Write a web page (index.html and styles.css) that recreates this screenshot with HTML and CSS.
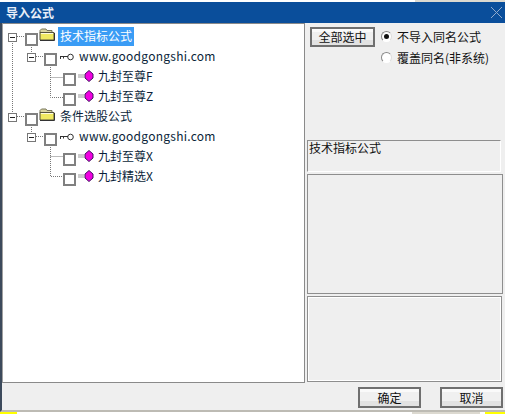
FILE: index.html
```html
<!DOCTYPE html>
<html lang="zh">
<head>
<meta charset="utf-8">
<title>导入公式</title>
<link rel="stylesheet" href="styles.css">
</head>
<body>
<div class="strip top-strip"><span class="fill"></span><span class="beige"></span></div>
<div class="dialog">
  <header class="titlebar">
    <span class="title">导入公式</span>
    <svg class="close" width="11" height="11" viewBox="0 0 11 11"><path d="M0 0L11 11M11 0L0 11" stroke="#8fa9cc" stroke-width="1" fill="none"/></svg>
  </header>
  <div class="content">
    <div class="tree">
      <svg class="lines" width="120" height="190" viewBox="0 0 120 190">
        <g stroke="#777" stroke-width="1" stroke-dasharray="1 1" fill="none">
          <path d="M11.500 17V88"/><path d="M16 12.500H24"/><path d="M16 92.500H24"/>
          <path d="M30.500 21V28"/><path d="M30.500 101V108"/>
          <path d="M35 32.500H43"/><path d="M35 112.500H43"/>
          <path d="M49.500 41V73.500H62"/><path d="M49.500 53.500H62"/>
          <path d="M49.500 121V152.500H62"/><path d="M49.500 132.500H62"/>
        </g>
      </svg>
      <div class="row row-a">
        <span class="expander"></span><span class="check"></span>
        <svg class="folder" width="16" height="13" viewBox="0 0 16 13"><path d="M1 2.500L2.500 1H7L8 2.500H13V5H1Z" fill="#d8d4a0" stroke="#77745a"/><path d="M1 4.500H15V12H1Z" fill="#f0ea62" stroke="#55533f"/><path d="M2 5.500H14" stroke="#fffde0"/><path d="M1 12.500H15.500V5" stroke="#333" fill="none"/></svg>
        <span class="label selected">技术指标公式</span>
      </div>
      <div class="row row-b">
        <span class="expander"></span><span class="check"></span>
        <svg class="key" width="16" height="8" viewBox="0 0 16 8"><circle cx="11.500" cy="4" r="2.800" fill="#fff" stroke="#333"/><path d="M1 3.500H9M1.500 3.500V6M4.500 3.500V5.500" stroke="#333" fill="none"/></svg>
        <span class="label url">www.goodgongshi.com</span>
      </div>
      <div class="row row-c">
        <span class="check"></span>
        <svg class="gem" width="16" height="12" viewBox="0 0 16 12"><path d="M0 5H6M0 7H6" stroke="#999"/><path d="M11 0.500L15 4V8L11 11.500L7 8V4Z" fill="#f000e0" stroke="#401060"/></svg>
        <span class="label">九封至尊F</span>
      </div>
      <div class="row row-c">
        <span class="check"></span>
        <svg class="gem" width="16" height="12" viewBox="0 0 16 12"><path d="M0 5H6M0 7H6" stroke="#999"/><path d="M11 0.500L15 4V8L11 11.500L7 8V4Z" fill="#f000e0" stroke="#401060"/></svg>
        <span class="label">九封至尊Z</span>
      </div>
      <div class="row row-a">
        <span class="expander"></span><span class="check"></span>
        <svg class="folder" width="16" height="13" viewBox="0 0 16 13"><path d="M1 2.500L2.500 1H7L8 2.500H13V5H1Z" fill="#d8d4a0" stroke="#77745a"/><path d="M1 4.500H15V12H1Z" fill="#f0ea62" stroke="#55533f"/><path d="M2 5.500H14" stroke="#fffde0"/><path d="M1 12.500H15.500V5" stroke="#333" fill="none"/></svg>
        <span class="label">条件选股公式</span>
      </div>
      <div class="row row-b">
        <span class="expander"></span><span class="check"></span>
        <svg class="key" width="16" height="8" viewBox="0 0 16 8"><circle cx="11.500" cy="4" r="2.800" fill="#fff" stroke="#333"/><path d="M1 3.500H9M1.500 3.500V6M4.500 3.500V5.500" stroke="#333" fill="none"/></svg>
        <span class="label url">www.goodgongshi.com</span>
      </div>
      <div class="row row-c">
        <span class="check"></span>
        <svg class="gem" width="16" height="12" viewBox="0 0 16 12"><path d="M0 5H6M0 7H6" stroke="#999"/><path d="M11 0.500L15 4V8L11 11.500L7 8V4Z" fill="#f000e0" stroke="#401060"/></svg>
        <span class="label">九封至尊X</span>
      </div>
      <div class="row row-c">
        <span class="check"></span>
        <svg class="gem" width="16" height="12" viewBox="0 0 16 12"><path d="M0 5H6M0 7H6" stroke="#999"/><path d="M11 0.500L15 4V8L11 11.500L7 8V4Z" fill="#f000e0" stroke="#401060"/></svg>
        <span class="label">九封精选X</span>
      </div>
    </div>
    <aside class="side">
      <div class="options">
        <button class="btn select-all">全部选中</button>
        <div class="radios">
          <div class="radio-row"><span class="radio on"></span><span>不导入同名公式</span></div>
          <div class="radio-row"><span class="radio"></span><span>覆盖同名(非系统)</span></div>
        </div>
      </div>
      <div class="panel info">技术指标公式</div>
      <div class="panel mid"></div>
      <div class="panel low"></div>
    </aside>
  </div>
  <footer class="footer">
    <button class="btn action">确定</button>
    <button class="btn action">取消</button>
  </footer>
</div>
<div class="strip bottom-strip"><span class="yellow y-left"></span><span class="fill"></span><span class="beige"></span><span class="yellow y-right"></span></div>
</body>
</html>
```
FILE: styles.css
```css
* { box-sizing: border-box; }
html, body { margin: 0; height: 100%; background: #fff; overflow: hidden; }
body { font: 12px/14px "Noto Sans CJK SC", "Liberation Sans", sans-serif; color: #111; }
.strip { display: flex; height: 2px; }
.fill { flex: 1; background: #fff; }
.beige { width: 90px; background: #dcd9d0; }
.bottom-strip .beige { width: 68px; margin-right: 5px; }
.yellow { background: #ffff00; }
.y-left { width: 17px; }
.y-right { width: 20px; }
.dialog { width: 505px; height: 410px; background: #efefef; border-left: 2px solid #3c4a5c; border-bottom: 2px solid #bdbbb4; display: flex; flex-direction: column; }
.titlebar { height: 21px; flex: none; margin-left: -2px; background: #0a4e9b; color: #fff; display: flex; align-items: center; justify-content: space-between; padding: 0 3px 0 6px; }
.title { font-size: 12px; font-weight: 700; color: #e8eef8; }
.close { display: block; }
.content { display: flex; height: 360px; flex: none; }
.tree { position: relative; width: 303px; flex: none; background: #fff; border: 1px solid #8a8a8a; border-left-color: #a0a0a0; padding-top: 5px; }
.lines { position: absolute; top: 0; left: -2px; }
.row { position: relative; display: flex; align-items: center; height: 20px; }
.row-a { padding-left: 5px; }
.row-b { padding-left: 24px; }
.row-c { padding-left: 60px; }
.expander { width: 9px; height: 9px; margin-bottom: 4px; border: 1px solid #777; background: linear-gradient(#222, #222) center/5px 1px no-repeat, #fff; flex: none; }
.check { width: 13px; height: 13px; border: 2px solid #808080; background: #fff; flex: none; }
.row-a .check { margin-left: 8px; }
.row-b .check { margin-left: 8px; }
.row-a .folder { margin: 0 3px 10px 1px; flex: none; }
.row-b .key { margin: 0 4px 4px 2px; flex: none; }
.gem { margin: 0 4px 6px 2px; flex: none; }
.label { font-size: 12px; line-height: 18px; white-space: nowrap; color: #0b1f3a; margin-bottom: 7px; }
.url { letter-spacing: 0.26px; }
.row-a .label { padding: 0 2px; margin-bottom: 6px; }
.selected { background: #3a9cf5; color: #fff; height: 19px; }
.row-a .selected { color: #fff; }
.side { flex: 1; min-width: 0; display: flex; flex-direction: column; padding: 0 4px 0 2px; }
.options { display: flex; height: 117px; padding: 4px 0 0 3px; gap: 6px; align-items: flex-start; flex: none; }
.btn { font: 12px/14px "Noto Sans CJK SC", "Liberation Sans", sans-serif; color: #111; padding: 0; border: 2px solid #6f6f6f; background: linear-gradient(#fafafa 0 20%, #f0f0f0 20% 70%, #e2e2e2 70%); }
.select-all { width: 65px; height: 20px; }
.radios { display: flex; flex-direction: column; gap: 4px; padding-top: 1px; }
.radio-row { display: flex; align-items: center; gap: 5px; height: 17px; color: #111; }
.radio { width: 11px; height: 11px; border-radius: 50%; border: 1px solid; border-color: #888 #ddd #fff #888; background: #fff; flex: none; position: relative; }
.radio.on::after { content: ""; position: absolute; inset: 2px; border-radius: 50%; background: #111; }
.panel { flex: none; background: #efefef; border: 1px solid #8e8e8e; }
.info { height: 32px; padding-left: 1px; border-right-color: #fff; border-bottom-color: #fff; }
.mid { height: 120px; margin-top: 2px; margin-right: -2px; }
.low { height: 86px; margin-top: 2px; margin-right: -1px; outline: 1px solid #fff; outline-offset: -2px; }
.footer { flex: 1; display: flex; justify-content: flex-end; gap: 19px; padding: 4px 2px 0 0; align-items: flex-start; }
.action { width: 63px; height: 21px; }
```
